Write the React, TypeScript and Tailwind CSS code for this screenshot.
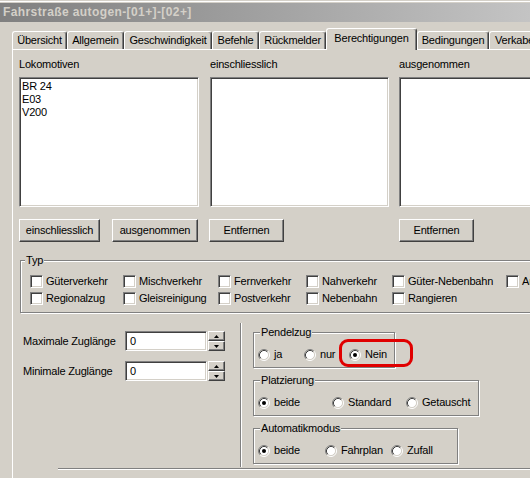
import React from "react";

const sunken =
  "border border-t-[#808080] border-l-[#808080] border-b-white border-r-white shadow-[inset_1px_1px_0_#404040,inset_-1px_-1px_0_#d4d0c8] bg-white";
const raised =
  "border border-t-white border-l-white border-b-[#404040] border-r-[#404040] shadow-[inset_-1px_-1px_0_#808080] bg-[#d4d0c8]";
const etched =
  "relative border border-[#808080] shadow-[inset_1px_1px_0_#fff,1px_1px_0_#fff]";

function Tab({ label, w, active }: { label: string; w: string; active?: boolean }) {
  if (active) {
    return (
      <div
        className={
          "relative z-10 -mb-px h-[22px] pb-[2px] shrink-0 flex items-center justify-center bg-[#d4d0c8] border-t border-l border-white border-r border-r-[#404040] rounded-t-[3px] shadow-[inset_-1px_0_0_#808080] " +
          w
        }
      >
        {label}
      </div>
    );
  }
  return (
    <div
      className={
        "h-[18px] shrink-0 flex items-center justify-center overflow-hidden whitespace-nowrap border-t border-l border-white border-r border-r-[#404040] rounded-t-[3px] shadow-[inset_-1px_0_0_#808080] " +
        w
      }
    >
      {label}
    </div>
  );
}

function Button({ label, w }: { label: string; w: string }) {
  return (
    <div className={"h-[23px] shrink-0 flex items-center justify-center " + raised + " " + w}>{label}</div>
  );
}

function Check({ label }: { label: string }) {
  return (
    <div className="flex items-center h-[13px] whitespace-nowrap">
      <div className={"w-[13px] h-[13px] shrink-0 " + sunken} />
      <span className="ml-[3px]">{label}</span>
    </div>
  );
}

function Radio({ checked }: { checked?: boolean }) {
  return (
    <svg width="12" height="12" viewBox="0 0 12 12" className="shrink-0">
      <circle cx="6" cy="6" r="4.5" fill="#fff" />
      <path d="M2.11 9.89 A5.5 5.5 0 0 1 9.89 2.11" stroke="#808080" fill="none" />
      <path d="M9.89 2.11 A5.5 5.5 0 0 1 2.11 9.89" stroke="#ffffff" fill="none" />
      <path d="M2.82 9.18 A4.5 4.5 0 0 1 9.18 2.82" stroke="#404040" fill="none" />
      <path d="M9.18 2.82 A4.5 4.5 0 0 1 2.82 9.18" stroke="#d4d0c8" fill="none" />
      {checked && <circle cx="6" cy="6" r="2" fill="#000" />}
    </svg>
  );
}

function RadioItem({ label, checked, w }: { label: string; checked?: boolean; w: string }) {
  return (
    <div className={"flex items-center h-[13px] shrink-0 whitespace-nowrap " + w}>
      <Radio checked={checked} />
      <span className="ml-[4px]">{label}</span>
    </div>
  );
}

function Spin() {
  return (
    <div className="ml-[1px] w-[17px] h-[20px] flex flex-col">
      <div className={"h-[10px] flex items-center justify-center " + raised}>
        <svg width="5" height="3" viewBox="0 0 5 3">
          <polygon points="2.5,0 5,3 0,3" fill="#000" />
        </svg>
      </div>
      <div className={"h-[10px] flex items-center justify-center " + raised}>
        <svg width="5" height="3" viewBox="0 0 5 3">
          <polygon points="0,0 5,0 2.5,3" fill="#000" />
        </svg>
      </div>
    </div>
  );
}

function NumField({ label, mt }: { label: string; mt: string }) {
  return (
    <div className={"flex items-center " + mt}>
      <div className="ml-[4px] w-[102px] whitespace-nowrap">{label}</div>
      <div className={"w-[82px] h-[20px] flex items-center pl-[4px] " + sunken}>0</div>
      <Spin />
    </div>
  );
}

function Group({
  title,
  w,
  children,
}: {
  title: string;
  w: string;
  children: React.ReactNode;
}) {
  return (
    <div className={etched + " h-[36px] pt-[15px] pl-[4px] " + w}>
      <span className="absolute -top-[7px] left-[6px] px-[1px] bg-[#d4d0c8] leading-[13px]">{title}</span>
      <div className="flex">{children}</div>
    </div>
  );
}

export default function App() {
  return (
    <div className="relative w-[530px] h-[478px] overflow-hidden bg-[#d4d0c8] font-['Liberation_Sans',Arial,sans-serif] text-[11px] leading-[13px] tracking-[-0.2px] text-black">
      <div className="h-[3px] border-y border-[#d4d0c8] bg-white" />
      <div className="h-[19px] bg-linear-to-r from-[#808080] to-[#c4c4c4] pl-[3px] text-[#d4d0c8] font-bold text-[12px] leading-[19px] tracking-[0.4px] whitespace-nowrap">
        Fahrstraße autogen-[01+]-[02+]
      </div>

      <div className="mt-[6px] h-[21px] flex items-end pl-[12px] whitespace-nowrap w-[700px]">
        <Tab label="Übersicht" w="w-[55px]" />
        <Tab label="Allgemein" w="w-[57px]" />
        <Tab label="Geschwindigkeit" w="w-[88px]" />
        <Tab label="Befehle" w="w-[47px]" />
        <Tab label="Rückmelder" w="w-[67px]" />
        <Tab label="Berechtigungen" w="w-[91px]" active />
        <Tab label="Bedingungen" w="w-[72px]" />
        <Tab label="Verkabelung" w="w-[80px] justify-start pl-[5px]" />
      </div>

      <div className="ml-[12px] border-t border-l border-white pl-[6px] pt-[8px] w-[600px] h-[440px]">
        <div className="flex">
          <div className="w-[180px] shrink-0">
            <div className="h-[13px] mb-[6px]">Lokomotiven</div>
            <div className={"h-[130px] pl-[2px] pt-[2px] " + sunken}>
              <div>BR 24</div>
              <div>E03</div>
              <div>V200</div>
            </div>
          </div>
          <div className="w-[179px] ml-[11px] shrink-0">
            <div className="h-[13px] mb-[6px]">einschliesslich</div>
            <div className={"h-[130px] " + sunken} />
          </div>
          <div className="w-[200px] ml-[10px] shrink-0">
            <div className="h-[13px] mb-[6px]">ausgenommen</div>
            <div className={"h-[130px] " + sunken} />
          </div>
        </div>

        <div className="mt-[12px] flex">
          <Button label="einschliesslich" w="w-[81px]" />
          <Button label="ausgenommen" w="w-[86px] ml-[12px]" />
          <Button label="Entfernen" w="w-[75px] ml-[11px]" />
          <Button label="Entfernen" w="w-[75px] ml-[115px]" />
        </div>

        <div className={etched + " mt-[18px] ml-[1px] w-[600px] h-[53px] pt-[14px] pl-[9px]"}>
          <span className="absolute -top-[7px] left-[4px] px-[1px] bg-[#d4d0c8]">Typ</span>
          <div className="grid grid-cols-[93px_95px_88px_86px_114px_80px] gap-y-[4px]">
            <Check label="Güterverkehr" />
            <Check label="Mischverkehr" />
            <Check label="Fernverkehr" />
            <Check label="Nahverkehr" />
            <Check label="Güter-Nebenbahn" />
            <Check label="Autozug" />
            <Check label="Regionalzug" />
            <Check label="Gleisreinigung" />
            <Check label="Postverkehr" />
            <Check label="Nebenbahn" />
            <Check label="Rangieren" />
          </div>
        </div>

        <div className="mt-[10px] flex">
          <div className="w-[221px] shrink-0 pt-[8px]">
            <NumField label="Maximale Zuglänge" mt="" />
            <NumField label="Minimale Zuglänge" mt="mt-[10px]" />
          </div>
          <div className="w-[2px] h-[144px] shrink-0 border-l border-[#808080] border-r border-r-white" />
          <div className="pl-[11px] pt-[9px] flex flex-col gap-[12px]">
            <Group title="Pendelzug" w="w-[142px]">
              <RadioItem label="ja" w="w-[46px]" />
              <RadioItem label="nur" w="w-[45px]" />
              <RadioItem label="Nein" w="w-[40px]" checked />
            </Group>
            <Group title="Platzierung" w="w-[226px]">
              <RadioItem label="beide" w="w-[74px]" checked />
              <RadioItem label="Standard" w="w-[74px]" />
              <RadioItem label="Getauscht" w="w-[66px]" />
            </Group>
            <Group title="Automatikmodus" w="w-[205px]">
              <RadioItem label="beide" w="w-[67px]" checked />
              <RadioItem label="Fahrplan" w="w-[66px]" />
              <RadioItem label="Zufall" w="w-[50px]" />
            </Group>
          </div>
        </div>

        <div className="mt-[1px] ml-[39px] w-[600px] h-[2px] border-t border-[#808080] border-b border-b-white" />
      </div>

      <div className="absolute left-[339px] top-[339px] w-[74px] h-[28px] border-[3px] border-[#e00000] rounded-[9px]" />
    </div>
  );
}
